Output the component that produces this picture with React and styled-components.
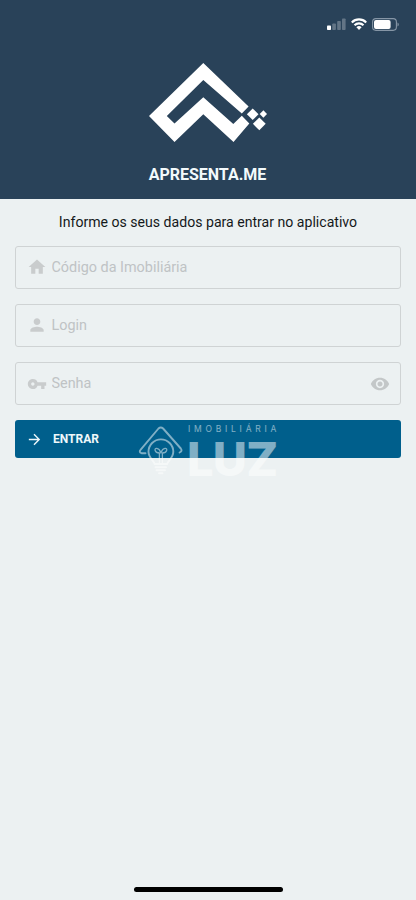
import React, { useState } from "react";
import styled, { createGlobalStyle } from "styled-components";
import {
	MdHome,
	MdPerson,
	MdVpnKey,
	MdRemoveRedEye,
	MdArrowForward,
} from "react-icons/md";

const GlobalStyle = createGlobalStyle`
	* {
		box-sizing: border-box;
	}

	body {
		margin: 0;
		background: #ecf1f2;
		font-family: Roboto, sans-serif;
	}
`;

export default function App() {
	const [showPassword, setShowPassword] = useState(false);

	return (
		<>
			<GlobalStyle />
			<Screen>
				<Header>
					<StatusBar>
						<Signal />
						<Wifi />
						<Battery />
					</StatusBar>
					<Logo />
					<Brand>APRESENTA.ME</Brand>
				</Header>
				<Form onSubmit={(e) => e.preventDefault()}>
					<Hint>Informe os seus dados para entrar no aplicativo</Hint>
					<Field>
						<MdHome size={20} />
						<Input type="text" placeholder="Código da Imobiliária" />
					</Field>
					<Field>
						<MdPerson size={20} />
						<Input type="text" placeholder="Login" />
					</Field>
					<Field>
						<MdVpnKey size={20} />
						<Input
							type={showPassword ? "text" : "password"}
							placeholder="Senha"
						/>
						<Eye size={20} onClick={() => setShowPassword(!showPassword)} />
					</Field>
					<SubmitArea>
						<Submit type="submit">
							<MdArrowForward size={17} />
							ENTRAR
						</Submit>
						<Watermark />
					</SubmitArea>
				</Form>
				<HomeIndicator />
			</Screen>
		</>
	);
}

function Signal() {
	return (
		<svg width="19" height="12" viewBox="0 0 19 12" fill="#fff">
			<rect x="0" y="7.5" width="4" height="4.5" rx="0.8" />
			<g opacity="0.27">
				<rect x="5.3" y="5.5" width="3.6" height="6.5" rx="0.8" />
				<rect x="10.2" y="3" width="3.6" height="9" rx="0.8" />
				<rect x="15" y="0.5" width="3.6" height="11.5" rx="0.8" />
			</g>
		</svg>
	);
}

function Wifi() {
	return (
		<svg width="16" height="12" viewBox="0 0 16 12">
			<g fill="none" stroke="#fff" strokeWidth="2.1">
				<path d="M0.8 4.4a10.2 10.2 0 0 1 14.4 0" />
				<path d="M3.5 7.2a6.4 6.4 0 0 1 9 0" />
			</g>
			<path d="M8 12L5.4 9.3a3.7 3.7 0 0 1 5.2 0z" fill="#fff" />
		</svg>
	);
}

function Battery() {
	return (
		<svg width="27" height="13" viewBox="0 0 27 13">
			<rect
				x="0.6"
				y="0.6"
				width="23.8"
				height="11.8"
				rx="3.3"
				fill="none"
				stroke="#8696a6"
				strokeWidth="1.1"
			/>
			<rect x="2" y="2" width="16.6" height="9" rx="2" fill="#fff" />
			<path d="M25.5 4.4a2.4 2.4 0 0 1 0 4.2z" fill="#8696a6" />
		</svg>
	);
}

function Logo() {
	return (
		<LogoSvg width="118" height="80" viewBox="149 63 118 80" fill="#fff">
			<path d="M203.3 63L248.6 106.4L241.8 113.4L203.3 80L166.8 116L174.5 123.6L203.3 97.2L233.3 124L241.8 115.8L249.3 123.6L233.5 142L203.3 114.2L174.5 142L149 116z" />
			<path d="M252.7 108.5l5.8 5.8l-5.8 5.8l-5.8 -5.8z" />
			<path d="M263.4 110.3l3.7 3.7l-3.7 3.7l-3.7 -3.7z" />
			<path d="M259.3 117.4l6.4 6.4l-6.4 6.4l-6.4 -6.4z" />
		</LogoSvg>
	);
}

function Watermark() {
	return (
		<WatermarkBox>
			<svg width="46" height="54" viewBox="138 424 46 54">
				<g
					fill="none"
					stroke="#fff"
					strokeWidth="1.9"
					strokeLinecap="round"
					strokeLinejoin="round"
				>
					<path d="M145.5 453.2h-4q-3 -1.2 -0.8 -3.6L158.5 428.5q2.3 -2.2 4.6 0L180.8 448.5q2 2.6 -1.2 4" />
					<path d="M154.6 464c0 -3 -6.1 -5.6 -6.1 -12.2a12.4 12.4 0 0 1 24.8 0c0 6.6 -6.1 9.2 -6.1 12.2z" />
					<path
						d="M159.4 463v-10M162.4 463v-10M159.4 453c-5 0 -5.5 -5 -2.6 -4.6s3.4 2.6 4.1 4.6M162.4 453c5 0 5.5 -5 2.6 -4.6s-3.4 2.6 -4.1 4.6"
						strokeWidth="1.3"
					/>
					<path d="M155.5 467.2h10.5M156.5 470.2h8.5M159 473.2h3.5" />
				</g>
			</svg>
			<WatermarkName>
				<Small>IMOBILIÁRIA</Small>
				<Big>LUZ</Big>
			</WatermarkName>
		</WatermarkBox>
	);
}

const Screen = styled.div`
	width: 100%;
	max-width: 416px;
	height: 900px;
	margin: 0 auto;
	display: flex;
	flex-direction: column;
	background: #ecf1f2;
`;

const Header = styled.header`
	height: 199px;
	flex-shrink: 0;
	display: flex;
	flex-direction: column;
	align-items: center;
	background: #294259;
`;

const StatusBar = styled.div`
	width: 100%;
	height: 63px;
	padding: 18px 17px 0 0;
	display: flex;
	align-items: flex-start;
	justify-content: flex-end;
	gap: 5px;

	svg {
		display: block;
	}
`;

const LogoSvg = styled.svg`
	display: block;
	flex-shrink: 0;
`;

const Brand = styled.h1`
	margin: 22px 1px 0 0;
	font-size: 16px;
	line-height: 20px;
	font-weight: 700;
	color: #f3fafc;
`;

const Form = styled.form`
	padding: 14px 15px 0;
	display: flex;
	flex-direction: column;
	gap: 15px;
`;

const Hint = styled.p`
	margin: 0 0 -1.5px;
	font-size: 14.1px;
	line-height: 19px;
	text-align: center;
	white-space: nowrap;
	color: #15191b;
`;

const Field = styled.label`
	height: 43.3px;
	padding: 0 10.5px;
	display: flex;
	align-items: center;
	gap: 5px;
	border: 1px solid #cfd3d4;
	border-radius: 3px;
	color: #c9cccd;

	svg {
		flex-shrink: 0;
	}
`;

const Input = styled.input`
	flex: 1;
	min-width: 0;
	padding: 0;
	border: 0;
	background: transparent;
	font-family: inherit;
	font-size: 14.4px;
	color: #15191b;

	&::placeholder {
		color: #bfc3c5;
		opacity: 1;
	}

	&:focus {
		outline: none;
	}
`;

const Eye = styled(MdRemoveRedEye)`
	color: #c3c7c8;
	cursor: pointer;
`;

const SubmitArea = styled.div`
	position: relative;
`;

const Submit = styled.button`
	width: 100%;
	height: 38px;
	padding: 0 11px;
	display: flex;
	align-items: center;
	gap: 10px;
	border: 0;
	border-radius: 3px;
	background: #005f8c;
	font-family: inherit;
	font-size: 12px;
	font-weight: 700;
	color: #eef8fb;
	cursor: pointer;
`;

/* partner brand printed over the lower edge of the button */
const WatermarkBox = styled.div`
	position: absolute;
	top: 4px;
	left: 123px;
	display: flex;
	gap: 3px;
	opacity: 0.5;
	pointer-events: none;
`;

const WatermarkName = styled.div`
	display: flex;
	flex-direction: column;
	color: #fff;
	white-space: nowrap;
`;

const Small = styled.span`
	padding-left: 1px;
	font: 400 8.5px/10px Inter, sans-serif;
	letter-spacing: 3.75px;
`;

const Big = styled.span`
	font: 800 47px/49px Inter, sans-serif;
	letter-spacing: -0.8px;
`;

const HomeIndicator = styled.div`
	width: 149px;
	height: 5px;
	margin: auto auto 8px;
	border-radius: 3px;
	background: #000;
`;
